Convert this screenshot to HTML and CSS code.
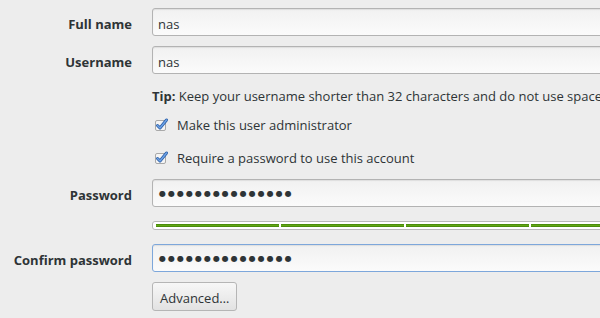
FILE: index.html
```html
<!DOCTYPE html>
<html lang="en">
<head>
  <meta charset="UTF-8" />
  <title>Add user</title>
  <link rel="stylesheet" href="styles.css">
</head>
<body>
  <form class="user-form">
    <div class="row row-first">
      <label class="label">Full name</label>
      <div class="entry">nas</div>
    </div>
    <div class="row row-username">
      <label class="label">Username</label>
      <div class="entry">nas</div>
    </div>
    <div class="row row-tip">
      <span></span>
      <p class="tip"><b>Tip:</b> Keep your username shorter than 32 characters and do not use spaces</p>
    </div>
    <div class="row row-check1">
      <span></span>
      <div class="check">
        <svg class="check-box" width="16" height="16" viewBox="0 0 16 16">
          <rect x="1.5" y="3.5" width="10" height="10" rx="1.5" fill="#f4f4f4" stroke="#a9a9a9"/>
          <path d="M3.5 8.5 L6 11 L12.5 3" fill="none" stroke="#2a5ea8" stroke-width="3" stroke-linecap="round" stroke-linejoin="round"/>
          <path d="M3.5 8.5 L6 11 L12.5 3" fill="none" stroke="#6fa3e6" stroke-width="1.4" stroke-linecap="round" stroke-linejoin="round"/>
        </svg>
        <span>Make this user administrator</span>
      </div>
    </div>
    <div class="row row-check2">
      <span></span>
      <div class="check">
        <svg class="check-box" width="16" height="16" viewBox="0 0 16 16">
          <rect x="1.5" y="3.5" width="10" height="10" rx="1.5" fill="#f4f4f4" stroke="#a9a9a9"/>
          <path d="M3.5 8.5 L6 11 L12.5 3" fill="none" stroke="#2a5ea8" stroke-width="3" stroke-linecap="round" stroke-linejoin="round"/>
          <path d="M3.5 8.5 L6 11 L12.5 3" fill="none" stroke="#6fa3e6" stroke-width="1.4" stroke-linecap="round" stroke-linejoin="round"/>
        </svg>
        <span>Require a password to use this account</span>
      </div>
    </div>
    <div class="row row-password">
      <label class="label">Password</label>
      <div class="entry dots">&#9679;&#9679;&#9679;&#9679;&#9679;&#9679;&#9679;&#9679;&#9679;&#9679;&#9679;&#9679;&#9679;&#9679;&#9679;</div>
    </div>
    <div class="row row-strength">
      <span></span>
      <div class="strength">
        <div class="seg"></div>
        <div class="seg"></div>
        <div class="seg"></div>
        <div class="seg"></div>
      </div>
    </div>
    <div class="row row-confirm">
      <label class="label">Confirm password</label>
      <div class="entry dots focused">&#9679;&#9679;&#9679;&#9679;&#9679;&#9679;&#9679;&#9679;&#9679;&#9679;&#9679;&#9679;&#9679;&#9679;&#9679;</div>
    </div>
    <div class="row row-advanced">
      <span></span>
      <div><button type="button" class="btn">Advanced…</button></div>
    </div>
  </form>
</body>
</html>
```

FILE: styles.css
```css
body {
  margin: 0;
  background: #ededed;
  color: #2e3436;
  font-family: 'Open Sans', 'DejaVu Sans', sans-serif;
  font-size: 13px;
  overflow: hidden;
  width: 600px;
  height: 318px;
}

.user-form {
  padding-top: 8px;
  width: 620px;
}

/* each row: label column + field column */
.row {
  display: grid;
  grid-template-columns: 132px 1fr;
  column-gap: 20px;
  align-items: center;
}

.row-username { margin-top: 10px; }
.row-tip { margin-top: 11px; height: 20px; }
.row-check1 { margin-top: 10px; height: 20px; }
.row-check2 { margin-top: 13px; height: 20px; }
.row-password { margin-top: 11px; }
.row-strength { margin-top: 14px; }
.row-confirm { margin-top: 14px; }
.row-advanced { margin-top: 10px; }

.label {
  text-align: right;
  font-weight: 700;
  white-space: nowrap;
  padding-top: 3px;
}

/* text entries */
.entry {
  box-sizing: border-box;
  height: 28px;
  line-height: 26px;
  padding: 2px 5px 0;
  border: 1px solid #b3b3b3;
  border-radius: 3px;
  background: linear-gradient(#f1f1f1, #fbfbfb);
  box-shadow: inset 0 1px 1px rgba(0, 0, 0, 0.08);
  white-space: nowrap;
  overflow: hidden;
}

.entry.dots {
  font-family: 'DejaVu Sans', sans-serif;
  font-size: 8px;
  letter-spacing: 2px;
  padding: 1px 0 0 6px;
}

.entry.focused {
  border-color: #7da7db;
}

.tip {
  margin: 0;
  white-space: nowrap;
  padding-top: 1px;
}

/* checkboxes */
.check {
  display: flex;
  align-items: center;
  gap: 7px;
  padding-left: 2px;
}

.check-box {
  display: block;
}

/* password strength bar */
.strength {
  box-sizing: border-box;
  height: 9px;
  border: 1px solid #b8b8b8;
  border-radius: 3px;
  background: #fff;
  padding: 2px 3px;
  display: flex;
  gap: 2px;
}

.seg {
  width: 123px;
  flex: none;
  height: 3px;
  background: linear-gradient(#3f7f08, #62a712 50%, #3f7f08);
}

/* button */
.btn {
  box-sizing: border-box;
  height: 29px;
  width: 85px;
  padding: 2px 7px 0;
  text-align: left;
  font: inherit;
  color: #2e3436;
  border: 1px solid #b5b5b5;
  border-radius: 3px;
  background: linear-gradient(#f7f7f7, #e2e2e2);
}
```
